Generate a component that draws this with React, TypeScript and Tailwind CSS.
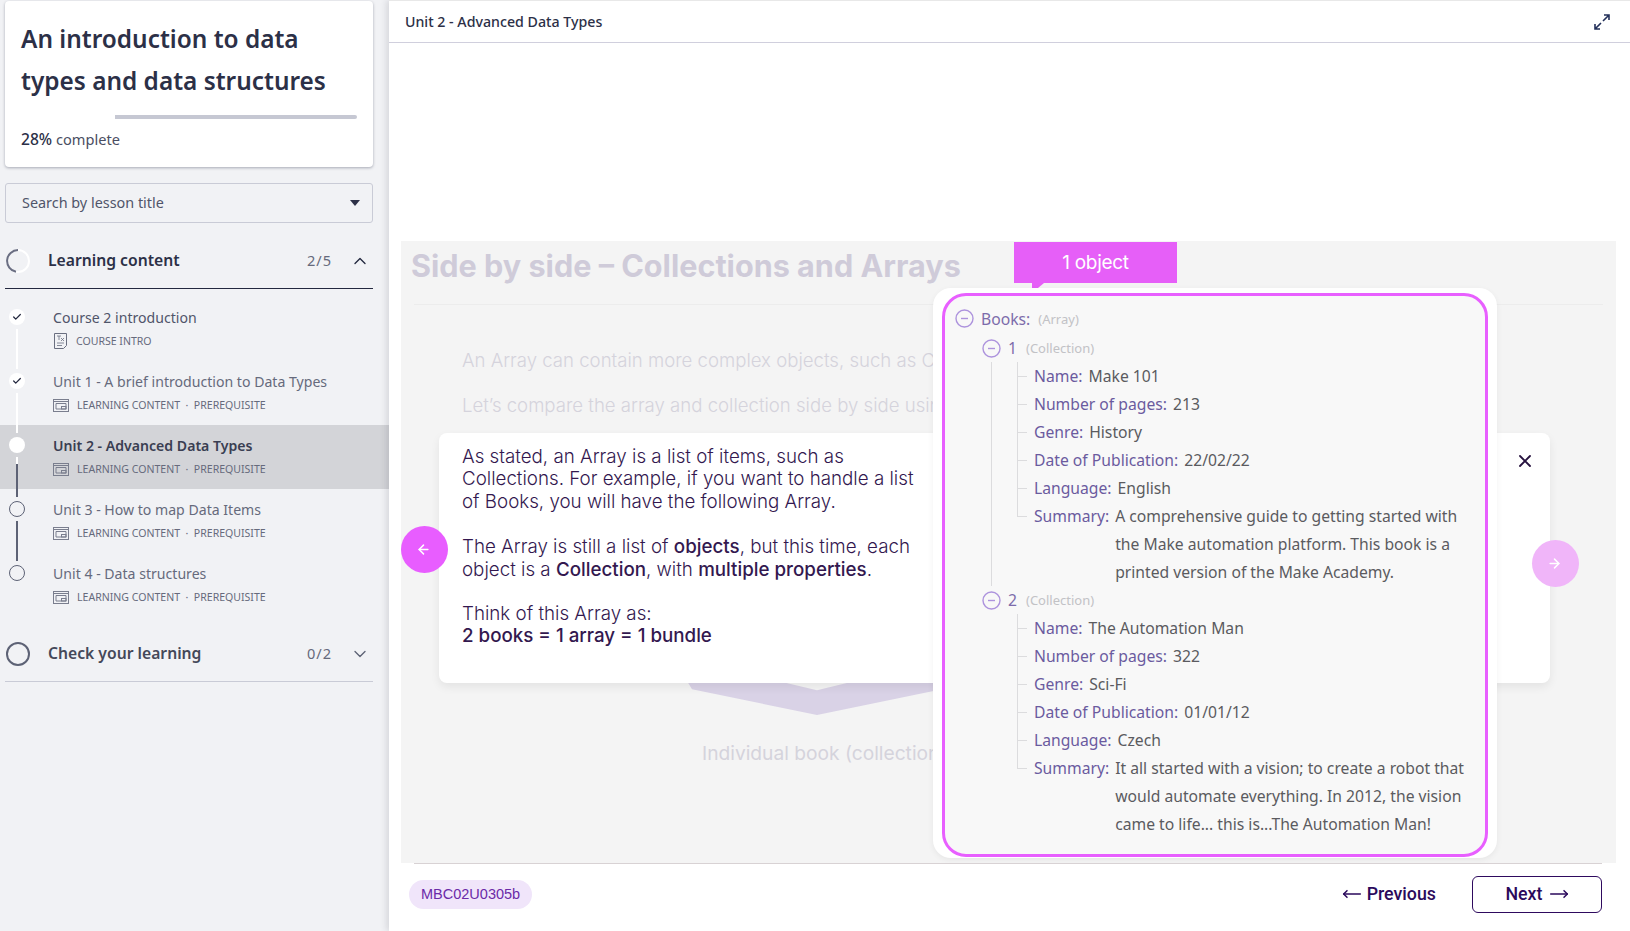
import React from "react";
import { Check, ChevronUp, ChevronDown, X, ArrowLeft, ArrowRight, MoveLeft, MoveRight } from "lucide-react";

const ui = "font-['Noto_Sans',sans-serif]";

function ContentIcon() {
  return (
    <svg width="16" height="13" viewBox="0 0 16 13" fill="none" stroke="#7a7e8e" strokeWidth="1" className="shrink-0">
      <rect x="0.5" y="0.5" width="15" height="12" />
      <path d="M0.5 2.5H15.5" />
      <path d="M3 4.5H13V10H3Z" />
      <rect x="8.5" y="7.5" width="4.5" height="2.5" />
    </svg>
  );
}

function IntroIcon() {
  return (
    <svg width="13" height="16" viewBox="0 0 13 16" fill="none" stroke="#6a6f80" strokeWidth="1" className="shrink-0">
      <path d="M0.5 0.5H12.5V12.5L9.5 15.5H0.5Z" />
      <path d="M3 3H7M5 3V7M7 5L10 8M10 5L7 8M3 10H10M3 12.5H8" strokeWidth="0.8" />
    </svg>
  );
}

function Lesson({ title, meta, state, line, active, intro }: { title: string; meta: string; state: "done" | "current" | "todo"; line?: "light" | "mixed" | "dark"; active?: boolean; intro?: boolean }) {
  return (
    <div className={`relative flex h-[64px] pl-[53px] pt-[11px] ${active ? "bg-[#d3d4d8]" : ""}`}>
      <div className={`absolute left-[9px] top-[12px] flex h-4 w-4 items-center justify-center rounded-full ${state === "todo" ? "border border-[#5d6275] bg-[#f1f2f5]" : "bg-white"}`}>
        {state === "done" && <Check size={10} strokeWidth={3} className="text-[#23283f]" />}
      </div>
      {line && (
        <div className={`absolute left-[16px] top-[32px] z-10 h-[40px] w-[2px] ${line === "light" ? "bg-white" : line === "mixed" ? "bg-gradient-to-b from-white from-[18%] to-[#5d6275] to-[18%]" : "bg-[#5d6275]"}`} />
      )}
      <div className="min-w-0">
        <div className={`text-[14.1px] leading-[20px] ${active ? "font-semibold text-[#3a3e52]" : intro ? "text-[#50556a]" : "text-[#666a7c]"}`}>{title}</div>
        <div className="mt-[5px] flex items-center gap-[8px] whitespace-pre text-[10.55px] leading-[16px] text-[#666a7c]">
          {intro ? <span className="ml-[1px]"><IntroIcon /></span> : <ContentIcon />}
          <span className={intro ? "ml-[1px]" : ""}>{meta}</span>
        </div>
      </div>
    </div>
  );
}

function MinusCircle() {
  return (
    <svg width="19" height="19" viewBox="0 0 19 19" fill="none" stroke="#ad93dd" strokeWidth="1.4" className="shrink-0">
      <circle cx="9.5" cy="9.5" r="8.5" />
      <path d="M6 9.5H13" />
    </svg>
  );
}

function Prop({ k, v, last }: { k: string; v: string; last?: boolean }) {
  return (
    <div className="relative flex pl-[16px]">
      <span className="absolute left-0 top-[14px] h-px w-[9px] bg-[#dcdcde]" />
      {last && <span className="absolute left-[-1px] top-[15px] h-full w-px bg-[#f8f8f8]" />}
      <span className="mr-[6px] shrink-0 text-[#6b5b9f]">{k}:</span>
      <span className="text-[#5b5b5f]">{v}</span>
    </div>
  );
}

function Book({ n, props, end }: { n: string; props: [string, string][]; end?: boolean }) {
  return (
    <div>
      <div className="flex h-[28px] items-center pl-[37px]">
        <MinusCircle />
        <span className="ml-[7px] text-[#7d6cab]">{n}</span>
        <span className="ml-[9px] text-[13px] text-[#c2c2c6]">(Collection)</span>
      </div>
      <div className={`ml-[46px] flex border-l ${end ? "border-transparent" : "border-[#dcdcde]"}`}>
        <div className="ml-[25px] flex-1 border-l border-[#dcdcde]">
          {props.map(([k, v], i) => (
            <Prop key={k} k={k} v={v} last={i === props.length - 1} />
          ))}
        </div>
      </div>
    </div>
  );
}

export default function App() {
  return (
    <div className={`flex h-[931px] w-[1630px] overflow-hidden bg-white ${ui}`}>
      <aside className="flex w-[389px] shrink-0 flex-col bg-[#f1f2f5] text-[#2c3047]">
        <div className="mx-[5px] mt-px h-[166px] w-[368px] rounded-[4px] bg-white px-[16px] pt-[17px] shadow-[0_1px_3px_rgba(30,35,60,0.35)]">
          <h1 className="text-[24.4px] font-semibold leading-[42px] text-[#2c3047]">An introduction to data types and data structures</h1>
          <div className="mt-[13px] flex h-[4px] w-[336px]">
            <div className="w-[94px] bg-white" />
            <div className="flex-1 rounded-r-sm bg-[#c6c8d3]" />
          </div>
          <div className="mt-[10px] text-[14.6px] leading-[20px] text-[#4a4e62]"><span className="text-[15.6px] font-medium text-[#2c3047]">28%</span> complete</div>
        </div>

        <div className="mx-[5px] mt-[16px] flex h-[40px] w-[368px] items-center justify-between rounded-[3px] border border-[#c9cbd6] pl-[16px] pr-[12px] text-[14.4px] text-[#50556a]">
          Search by lesson title
          <span className="h-0 w-0 border-x-[5px] border-t-[6px] border-x-transparent border-t-[#2c3047]" />
        </div>

        <div className="mx-[5px] mt-[16px] flex h-[50px] w-[368px] items-center border-b border-[#23283f] pb-[6px]">
          <svg width="26" height="26" viewBox="0 0 26 26" fill="none" className="shrink-0">
            <circle cx="13" cy="13" r="11" stroke="#ffffff" strokeWidth="2" />
            <path d="M13 2A11 11 0 0 0 11 23.8" stroke="#6a6e82" strokeWidth="2" />
          </svg>
          <span className="ml-[17px] flex-1 text-[15.7px] font-semibold">Learning content</span>
          <span className="mr-[18px] text-[14.6px] tracking-[1px] text-[#666a7c]">2/5</span>
          <ChevronUp size={20} strokeWidth={1.6} className="mr-[3px] text-[#23283f]" />
        </div>

        <div className="mt-[8px]">
          <Lesson title="Course 2 introduction" meta="COURSE INTRO" state="done" line="light" intro />
          <Lesson title="Unit 1 - A brief introduction to Data Types" meta="LEARNING CONTENT  ·  PREREQUISITE" state="done" line="light" />
          <Lesson title="Unit 2 - Advanced Data Types" meta="LEARNING CONTENT  ·  PREREQUISITE" state="current" line="mixed" active />
          <Lesson title="Unit 3 - How to map Data Items" meta="LEARNING CONTENT  ·  PREREQUISITE" state="todo" line="dark" />
          <Lesson title="Unit 4 - Data structures" meta="LEARNING CONTENT  ·  PREREQUISITE" state="todo" />
        </div>

        <div className="mx-[5px] mt-[11px] flex h-[54px] w-[368px] items-center border-b border-[#c9cbd6] pb-px">
          <svg width="26" height="26" viewBox="0 0 26 26" fill="none" className="shrink-0">
            <circle cx="13" cy="13" r="11" stroke="#5d6275" strokeWidth="2" />
          </svg>
          <span className="ml-[17px] flex-1 text-[15.7px] font-semibold text-[#444859]">Check your learning</span>
          <span className="mr-[18px] text-[14.6px] tracking-[1px] text-[#666a7c]">0/2</span>
          <ChevronDown size={20} strokeWidth={1.6} className="mr-[3px] text-[#5d6275]" />
        </div>
      </aside>

      <main className="relative z-10 flex h-full flex-1 flex-col bg-white shadow-[-3px_0_6px_rgba(40,40,60,0.12)]">
        <header className="flex h-[43px] shrink-0 items-center justify-between border-b border-t border-b-[#d0cfdd] border-t-[#e8e8e8] pl-[16px] pr-[20px]">
          <span className="text-[14.2px] font-medium text-[#2c3047]">Unit 2 - Advanced Data Types</span>
          <svg width="16" height="16" viewBox="0 0 16 16" fill="none" stroke="#23305a" strokeWidth="1.6">
            <path d="M9 7L15 1M10 1H15V6M7 9L1 15M1 10V15H6" />
          </svg>
        </header>

        <div className="flex-1 pl-[12px] pr-[14px] pt-[198px]">
          <section className="relative h-[622px] w-[1215px] overflow-hidden bg-[#f4f4f4] font-['Inter',sans-serif]">
            <h2 className="pl-[10px] pt-[6px] text-[30.6px] font-bold leading-[38px] text-[#cfcbd9]">Side by side – Collections and Arrays</h2>
            <div className="mx-[13px] mt-[19px] border-t border-[#ececec]" />
            <p className="pl-[61px] pt-[43px] text-[18.6px] font-light leading-[24px] text-[#d5d3dc]">An Array can contain more complex objects, such as Collections.</p>
            <p className="pl-[61px] pt-[21px] text-[18.6px] font-light leading-[24px] text-[#d5d3dc]">Let’s compare the array and collection side by side using an example.</p>
            <svg width="260" height="35" viewBox="0 0 260 34" preserveAspectRatio="none" fill="#d9d2e6" className="ml-[286px] mt-[264px] block">
              <path d="M0 0L5 8L130 33L255 8L260 0H168L130 9L91 0Z" />
            </svg>
            <p className="pl-[301px] pt-[25px] text-[19.2px] leading-[24px] text-[#d5d3dc]">Individual book (collection)</p>

            <div className="absolute left-[38px] top-[192px] h-[250px] w-[1111px] rounded-[8px] bg-white px-[23px] pt-[13px] text-[18.75px] font-light leading-[22.4px] text-[#33184f] shadow-[0_4px_10px_rgba(0,0,0,0.07)]">
              <p className="w-[460px]">As stated, an Array is a list of items, such as Collections. For example, if you want to handle a list of Books, you will have the following Array.</p>
              <p className="mt-[23px] w-[460px]">The Array is still a list of <b className="font-medium">objects</b>, but this time, each object is a <b className="font-medium">Collection</b>, with <b className="font-medium">multiple properties</b>.</p>
              <p className="mt-[22px]">Think of this Array as:</p>
              <p className="font-medium">2 books = 1 array = 1 bundle</p>
              <X size={20} strokeWidth={2.2} className="absolute right-[15px] top-[18px] text-[#27123f]" />
            </div>

            <div className="absolute left-0 top-[285px] flex h-[47px] w-[47px] items-center justify-center rounded-full bg-[#e85dff] pr-[2px] text-white">
              <ArrowLeft size={15} strokeWidth={2.4} />
            </div>
            <div className="absolute left-[1131px] top-[299px] flex h-[47px] w-[47px] items-center justify-center rounded-full bg-[#f0b5f9] pr-[3px] text-white">
              <ArrowRight size={15} strokeWidth={2.4} />
            </div>

            <div className="absolute left-[613px] top-[1px] flex h-[41px] w-[163px] items-center justify-center bg-[#e65ff8] pt-[2px] text-[19px] font-normal tracking-[-0.3px] text-white">1 object</div>
            <div className="absolute left-[631px] top-[42px] h-0 w-0 border-r-[12px] border-t-[10px] border-r-transparent border-t-[#e65ff8]" />

            <div className="absolute left-[532px] top-[47px] h-[570px] w-[564px] rounded-[18px] bg-white px-[9px] pt-[5px] shadow-[0_2px_6px_rgba(0,0,0,0.06)]">
              <div className={`h-[564px] w-[546px] rounded-[24px] border-[3px] border-[#e85fff] bg-[#f8f8f8] pt-[9px] text-[15.7px] leading-[28px] ${ui}`}>
                <div className="flex h-[29px] items-center pb-[2px] pl-[10px]">
                  <MinusCircle />
                  <span className="ml-[7px] text-[#7d6cab]">Books:</span>
                  <span className="ml-[8px] text-[13px] text-[#c2c2c6]">(Array)</span>
                </div>
                <Book n="1" props={[["Name", "Make 101"], ["Number of pages", "213"], ["Genre", "History"], ["Date of Publication", "22/02/22"], ["Language", "English"], ["Summary", "A comprehensive guide to getting started with the Make automation platform. This book is a printed version of the Make Academy."]]} />
                <Book n="2" end props={[["Name", "The Automation Man"], ["Number of pages", "322"], ["Genre", "Sci-Fi"], ["Date of Publication", "01/01/12"], ["Language", "Czech"], ["Summary", "It all started with a vision; to create a robot that would automate everything. In 2012, the vision came to life... this is...The Automation Man!"]]} />
              </div>
            </div>
          </section>
        </div>

        <footer className="ml-[25px] mr-[28px] flex h-[68px] shrink-0 items-center justify-between border-t border-[#d8d2d4]">
          <span className="-ml-[5px] -mt-[7px] rounded-full bg-[#f0e5fa] px-[12px] py-[5px] font-['Liberation_Sans',sans-serif] text-[14.5px] leading-[19px] text-[#6b2aa8]">MBC02U0305b</span>
          <div className="-mt-[7px] flex items-center gap-[36px] font-['Roboto',sans-serif] text-[17.8px] font-medium text-[#2b0a5c]">
            <span className="flex items-center gap-[5px]"><MoveLeft size={20} strokeWidth={1.8} className="-ml-[1px]" />Previous</span>
            <span className="flex h-[37px] w-[130px] items-center justify-center gap-[6px] rounded-[6px] border-[1.5px] border-[#2e0a5e]">Next<MoveRight size={20} strokeWidth={1.8} /></span>
          </div>
        </footer>
      </main>
    </div>
  );
}
